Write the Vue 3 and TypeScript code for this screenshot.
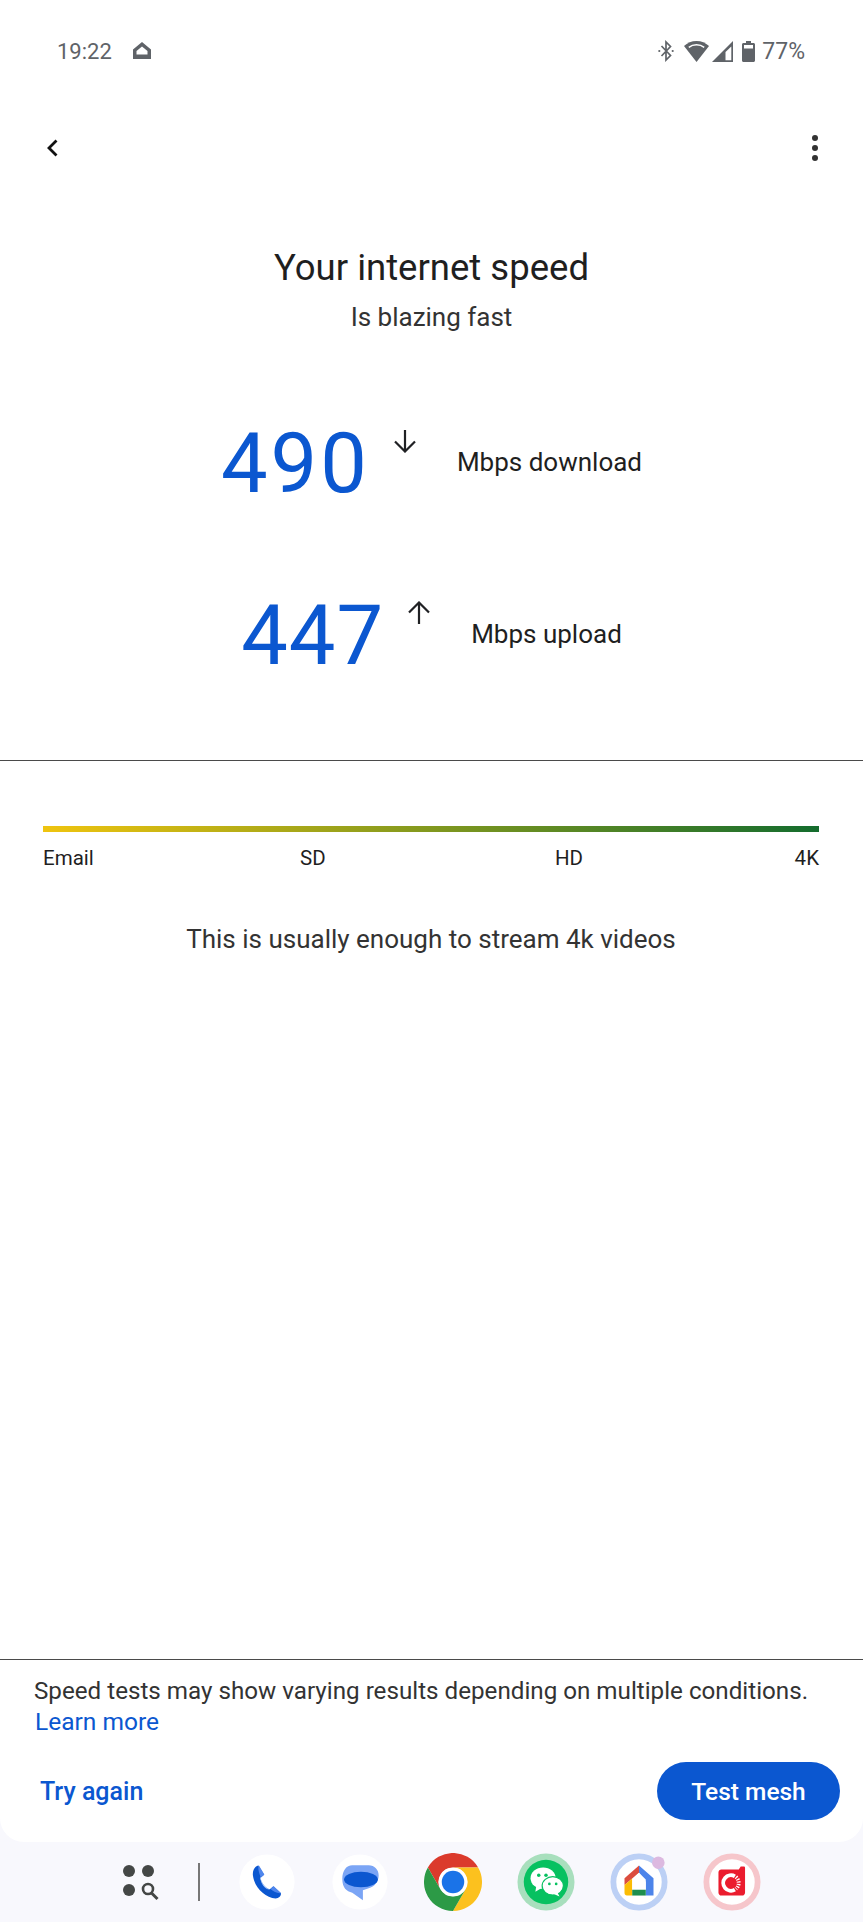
<script setup lang="ts">
// Speed test result screen
const speeds = [
  { value: '490', arrow: 'down', label: 'Mbps download', tracking: 3 },
  { value: '447', arrow: 'up', label: 'Mbps upload', tracking: 1 },
]
const qualityLabels = ['Email', 'SD', 'HD', '4K']
</script>

<template>
  <div class="screen">
    <div class="panel">
      <header class="status-bar">
        <div class="status-left">
          <span class="clock">19:22</span>
          <svg class="home-glyph" width="18" height="17" viewBox="0 0 18 17">
            <path fill-rule="evenodd" d="M9 0l9 7.500V17H0V7.500zM9 4.500L3.500 9v3.500h11V9z" fill="#5f6368" />
          </svg>
        </div>
        <div class="status-right">
          <svg class="bluetooth" width="16" height="22" viewBox="0 0 16 22" fill="none" stroke="#5f6368" stroke-width="1.700">
            <path d="M3.500 6l9 9.500L8 20V2l4.500 4.500L3.500 16" />
            <circle cx="1.300" cy="11" r="1.100" fill="#5f6368" stroke="none" />
            <circle cx="14.700" cy="11" r="1.100" fill="#5f6368" stroke="none" />
          </svg>
          <svg class="wifi" width="25" height="21" viewBox="0 0 25 21">
            <path d="M12.500 0C7.600 0 3.300 1.900 0 5l12.500 16L25 5C21.700 1.900 17.400 0 12.500 0z" fill="#5f6368" />
            <path d="M4.800 6.300C7 4.600 9.600 3.700 12.500 3.700s5.500.9 7.700 2.600" fill="none" stroke="#fff" stroke-width="1.500" />
          </svg>
          <svg class="signal" width="21" height="21" viewBox="0 0 21 21">
            <path d="M21 0v21H0z" fill="#5f6368" />
            <path d="M19.300 5.500V19.300h-5.800V11z" fill="#fff" />
          </svg>
          <svg class="battery" width="13" height="21" viewBox="0 0 13 21">
            <path d="M4 0h5v2h2.500c.8 0 1.500.7 1.500 1.500V19.500c0 .8-.7 1.500-1.500 1.500h-10C.7 21 0 20.300 0 19.500V3.500C0 2.700.7 2 1.500 2H4z" fill="#5f6368" />
            <rect x="2" y="4" width="9" height="3.500" fill="#fff" />
          </svg>
          <span class="battery-level">77%</span>
        </div>
      </header>

      <nav class="toolbar">
        <svg width="14" height="20" viewBox="0 0 14 20" fill="none" stroke="#111" stroke-width="2.800">
          <path d="M11.500 2.500L4 10l7.500 7.500" />
        </svg>
        <div class="menu-dots"><i /><i /><i /></div>
      </nav>

      <section class="hero">
        <h1>Your internet speed</h1>
        <p>Is blazing fast</p>
      </section>

      <section class="speeds">
        <div v-for="row in speeds" :key="row.label" class="speed-row">
          <span class="speed-value" :style="{ letterSpacing: row.tracking + 'px' }">{{ row.value }}</span>
          <svg class="speed-arrow" width="24" height="24" viewBox="0 0 24 24" fill="none" stroke="#202124" stroke-width="2.200">
            <path v-if="row.arrow === 'down'" d="M12 1v21M2 12.500l10 10 10-10" />
            <path v-else d="M12 23V2M2 11.500l10-10 10 10" />
          </svg>
          <span class="speed-label">{{ row.label }}</span>
        </div>
      </section>

      <hr class="rule rule-top" />

      <section class="quality">
        <div class="quality-bar" />
        <div class="quality-labels">
          <span v-for="label in qualityLabels" :key="label">{{ label }}</span>
        </div>
        <p class="quality-note">This is usually enough to stream 4k videos</p>
      </section>

      <footer class="foot">
        <hr class="rule" />
        <p class="disclaimer">Speed tests may show varying results depending on multiple conditions.</p>
        <a class="learn-more">Learn more</a>
        <div class="actions">
          <a class="try-again">Try again</a>
          <button class="test-mesh">Test mesh</button>
        </div>
      </footer>
    </div>

    <div class="dock">
      <svg class="drawer" width="36" height="36" viewBox="0 0 36 36">
        <circle cx="6" cy="6" r="6" fill="#444746" />
        <circle cx="25" cy="6" r="6" fill="#444746" />
        <circle cx="6" cy="25" r="6" fill="#444746" />
        <circle cx="25" cy="24" r="5" fill="none" stroke="#444746" stroke-width="2.600" />
        <path d="M28.500 28l6 6" stroke="#444746" stroke-width="3" />
      </svg>
      <span class="dock-divider" />

      <svg class="app" viewBox="0 0 60 60">
        <circle cx="30" cy="30" r="28.500" fill="#fff" />
        <path d="M21 13c-4 1-6 5-5.600 10C17 36 28 46 39 47c3 0 5.500-2 5.500-5l-8-7.500-3.500 3C28 36 24 31 23 25.500l4-3z" fill="#0b57d0" />
        <path d="M21.500 12.700l5.800 9.500-3.700 3.300c-1.200-3.500-3.500-9-2.100-12.800zM37 34.500l7.500 7c-3.500.8-9-2.500-11-4.200z" fill="#4f86ec" />
        <path d="M23.300 25.500C24.500 31 28.300 36 33 37.700c-4.500.5-9.800-6-9.700-12.200z" fill="#a8c7fa" />
      </svg>

      <svg class="app" viewBox="0 0 60 60">
        <circle cx="30" cy="30" r="28.500" fill="#fff" />
        <path d="M22 12.700h17c6 0 10.300 4.500 10.300 10.500S45 35 39 36.500l-6 2v10.500L22 41c-6-1-10.300-5-10.300-14S16 12.700 22 12.700z" fill="#7ba5f5" />
        <ellipse cx="31" cy="27.500" rx="17.500" ry="8" fill="#0b57d0" />
      </svg>

      <svg class="app" viewBox="0 0 48 48">
        <path d="M24 12h20.800A24 24 0 0 0 3.200 12l10.400 18A12 12 0 0 1 24 12z" fill="#db3a2c" />
        <path d="M24 48l10.400-18A12 12 0 0 0 24 12h20.800A24 24 0 0 1 24 48z" fill="#fcc11e" />
        <path d="M3.200 12l10.400 18a12 12 0 0 0 20.800 0L24 48A24 24 0 0 1 3.200 12z" fill="#2c9a46" />
        <circle cx="24" cy="24" r="11.800" fill="#fff" />
        <circle cx="24" cy="24" r="9.300" fill="#1a73e8" />
      </svg>

      <svg class="app" viewBox="0 0 60 60">
        <circle cx="30" cy="30" r="29.500" fill="#a8dfbd" />
        <circle cx="30" cy="30" r="23" fill="#07c160" />
        <ellipse cx="27" cy="26" rx="13" ry="11" fill="#fff" />
        <path d="M20 34l-1 6 7-4z" fill="#fff" />
        <ellipse cx="37" cy="34" rx="11" ry="9.500" fill="#fff" stroke="#07c160" stroke-width="1.200" />
        <path d="M42 41l2 4-6-2.500z" fill="#fff" />
        <circle cx="22.500" cy="23" r="1.800" fill="#07c160" />
        <circle cx="30" cy="23" r="1.800" fill="#07c160" />
        <circle cx="33.500" cy="32" r="1.400" fill="#07c160" />
        <circle cx="40.500" cy="32" r="1.400" fill="#07c160" />
      </svg>

      <svg class="app" viewBox="0 0 60 60">
        <circle cx="30" cy="30" r="26.500" fill="#fff" stroke="#bcd0f5" stroke-width="6" />
        <path d="M30 13L15 26v7l15-12.500z" fill="#db4d3f" />
        <path d="M30 13l15 13v18h-8V30l-7-9.500z" fill="#4c84ea" />
        <path d="M15 33l8-6.500V44h-5.500c-1.400 0-2.500-1.100-2.500-2.500z" fill="#fbbc04" />
        <path d="M23 27l7-6.500 7 7V38H23z" fill="#fff" />
        <rect x="23" y="38" width="14" height="6" fill="#1e8e4e" />
        <circle cx="50" cy="10" r="6.500" fill="#dcb9e0" />
      </svg>

      <svg class="app" viewBox="0 0 60 60">
        <circle cx="30" cy="30" r="26.500" fill="#fff" stroke="#f6c6cb" stroke-width="6" />
        <path d="M19 17h18l2-3h3c1 0 1.500.5 1.500 1.500V41c0 1.600-1.400 3-3 3H19c-1.600 0-3-1.400-3-3V20c0-1.600 1.400-3 3-3z" fill="#eb1c2e" />
        <path d="M33 24.100a8 8 0 1 0 0 13.800" fill="none" stroke="#fff" stroke-width="4" />
        <path d="M34.100 24.900a8 8 0 0 1 0 12.200" fill="none" stroke="#fff" stroke-width="4" stroke-dasharray="1.300 1.300" />
      </svg>
    </div>
  </div>
</template>

<style>
html,
body {
  margin: 0;
  background: #f8f8fd;
}
</style>

<style scoped>
.screen {
  display: flex;
  flex-direction: column;
  width: 863px;
  height: 1922px;
  background: #f8f8fd;
  color: #1f1f1f;
  font-family: Roboto, "Liberation Sans", sans-serif;
}

.panel {
  display: flex;
  flex-direction: column;
  flex: 1;
  min-height: 0;
  background: #fff;
  border-radius: 0 0 24px 24px;
}

.status-bar {
  display: flex;
  justify-content: space-between;
  align-items: center;
  height: 40px;
  margin-top: 31px;
  padding: 0 58px 0 57px;
  color: #5f6368;
  font-size: 22px;
}

.status-left,
.status-right {
  display: flex;
  align-items: center;
}

.home-glyph {
  margin-left: 21px;
  margin-bottom: 1px;
}

.status-right svg {
  margin-right: 7px;
}

.status-right .bluetooth {
  margin-right: 10px;
}

.status-right .wifi {
  margin-right: 3px;
}

.status-right .signal {
  margin-right: 9px;
}

.battery-level {
  font-size: 23px;
}

.toolbar {
  display: flex;
  justify-content: space-between;
  align-items: center;
  height: 30px;
  margin-top: 62px;
  padding: 0 45px;
}

.menu-dots {
  display: flex;
  flex-direction: column;
  gap: 4px;
}

.menu-dots i {
  width: 6px;
  height: 6px;
  border-radius: 50%;
  background: #333;
}

.hero {
  margin-top: 83px;
  text-align: center;
}

.hero h1 {
  margin: 0;
  font-size: 36.5px;
  line-height: 44px;
  font-weight: 400;
}

.hero p {
  margin: 9px 0 0;
  color: #333;
  font-size: 26px;
  line-height: 36px;
}

.speeds {
  display: flex;
  flex-direction: column;
  gap: 68px;
  margin-top: 77px;
}

.speed-row {
  display: flex;
  justify-content: center;
  align-items: flex-start;
  height: 104px;
}

.speed-value {
  color: #0b57d0;
  font-size: 83px;
  line-height: 104px;
  font-weight: 400;
}

.speed-arrow {
  margin: 17px 0 0 23px;
}

.speed-label {
  margin: 32px 0 0 40px;
  font-size: 26px;
  line-height: 36px;
}

.rule {
  width: 100%;
  height: 1px;
  margin: 0;
  border: 0;
  background: #4a4a4a;
}

.rule-top {
  margin-top: 72px;
}

.quality {
  padding: 0 44px 0 43px;
}

.quality-bar {
  height: 6px;
  margin-top: 65px;
  background: linear-gradient(90deg, #efc40f, #146c2e);
}

.quality-labels {
  display: grid;
  grid-template-columns: 257px 255px 1fr auto;
  margin-top: 12px;
  font-size: 20.5px;
  line-height: 28px;
}

.quality-note {
  margin: 49px 0 0;
  text-align: center;
  font-size: 26px;
  line-height: 36px;
  color: #333;
}

.foot {
  margin-top: auto;
}

.disclaimer {
  margin: 14px 0 0;
  padding: 0 34px;
  font-size: 24.2px;
  line-height: 34px;
  color: #333;
  white-space: nowrap;
}

.learn-more {
  display: block;
  padding: 0 35px;
  color: #0b57d0;
  font-size: 24.5px;
  line-height: 28px;
}

.actions {
  display: flex;
  justify-content: space-between;
  align-items: center;
  margin-top: 26px;
  padding: 0 23px 22px 40px;
}

.try-again {
  color: #0b57d0;
  font-size: 25px;
  font-weight: 500;
}

.test-mesh {
  width: 183px;
  height: 58px;
  border: 0;
  border-radius: 29px;
  background: #0b57d0;
  color: #fff;
  font: 500 24.5px Roboto, "Liberation Sans", sans-serif;
}

.dock {
  display: flex;
  align-items: center;
  flex: none;
  height: 80px;
  padding-left: 123px;
}

.drawer {
  margin-top: 1px;
}

.dock-divider {
  width: 2px;
  height: 38px;
  margin: 0 38px 0 39px;
  background: #777;
}

.app {
  width: 58px;
  height: 58px;
  margin-right: 35px;
}
</style>
